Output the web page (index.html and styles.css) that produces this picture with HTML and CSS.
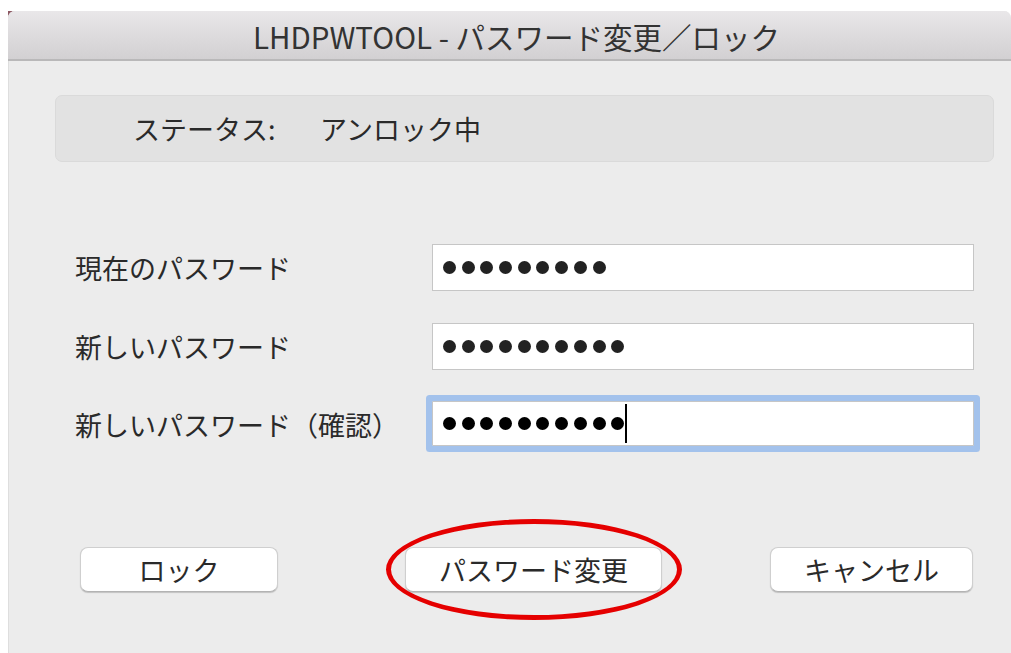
FILE: index.html
```html
<!DOCTYPE html>
<html lang="ja">
<head>
<meta charset="utf-8">
<title>LHDPWTOOL</title>
<link rel="stylesheet" href="styles.css">
</head>
<body>
<div class="desk">
  <div class="window">
    <header class="titlebar">LHDPWTOOL - パスワード変更／ロック</header>
    <main class="content">
      <div class="status">
        <span class="status-label">ステータス:</span>
        <span class="status-value">アンロック中</span>
      </div>

      <div class="form">
        <label class="label">現在のパスワード</label>
        <div class="field">
          <span class="dot"></span><span class="dot"></span><span class="dot"></span>
          <span class="dot"></span><span class="dot"></span><span class="dot"></span>
          <span class="dot"></span><span class="dot"></span><span class="dot"></span>
        </div>

        <label class="label">新しいパスワード</label>
        <div class="field">
          <span class="dot"></span><span class="dot"></span><span class="dot"></span>
          <span class="dot"></span><span class="dot"></span><span class="dot"></span>
          <span class="dot"></span><span class="dot"></span><span class="dot"></span>
          <span class="dot"></span>
        </div>

        <label class="label">新しいパスワード（確認）</label>
        <div class="field field-focus">
          <span class="dot"></span><span class="dot"></span><span class="dot"></span>
          <span class="dot"></span><span class="dot"></span><span class="dot"></span>
          <span class="dot"></span><span class="dot"></span><span class="dot"></span>
          <span class="dot"></span><span class="caret"></span>
        </div>
      </div>

      <div class="actions">
        <button class="btn btn-lock" type="button">ロック</button>
        <div class="highlight-wrap">
          <button class="btn btn-change" type="button">パスワード変更</button>
          <span class="ring"></span>
        </div>
        <button class="btn btn-cancel" type="button">キャンセル</button>
      </div>
    </main>
  </div>
</div>
</body>
</html>
```

FILE: styles.css
```css
html, body {
  margin: 0;
  padding: 0;
  background: #ffffff;
}

body {
  font-family: "Noto Sans CJK JP", "Noto Sans", sans-serif;
  color: #262626;
}

/* desktop behind the window; only its top-left corner peeks out */
.desk {
  margin: 11px 0 0 8px;
  width: 1003px;
  height: 642px;
  background: linear-gradient(135deg, #8c5862 0 9px, #ffffff 9px);
}

.window {
  width: 1003px;
  height: 642px;
  background: #ececec;
  border-top-left-radius: 7px;
  border-top-right-radius: 7px;
  overflow: hidden;
  display: flex;
  flex-direction: column;
  box-shadow: inset 1px 0 0 #dedede;
}

.titlebar {
  height: 50px;
  box-sizing: border-box;
  flex: none;
  display: flex;
  align-items: center;
  justify-content: center;
  font-size: 29.5px;
  color: #333333;
  background: linear-gradient(#e9e7e9, #d2d0d2);
  border-bottom: 2px solid #b9b8b9;
  padding: 2px 0 0 14px;
}

.content {
  flex: 1;
  padding: 34px 16px 0 47px;
}

.status {
  width: 939px;
  height: 67px;
  box-sizing: border-box;
  background: #e2e2e2;
  border: 1px solid #dadada;
  border-radius: 7px;
  display: flex;
  align-items: center;
  padding-left: 77px;
  font-size: 27px;
  color: #2a2a2a;
}

.status-label {
  width: 187px;
}

.form {
  margin-top: 82px;
  padding-left: 20px;
  display: grid;
  grid-template-columns: 357px 542px;
  row-gap: 32px;
  align-items: center;
}

.label {
  font-size: 27px;
  color: #2a2a2a;
  line-height: 1;
}

.field {
  height: 47px;
  box-sizing: border-box;
  background: #ffffff;
  border: 1px solid #c6c6c6;
  display: flex;
  align-items: center;
  gap: 5.7px;
  padding-left: 10px;
}

.field-focus {
  height: 45px;
  margin-top: -1px;
  box-shadow: 0 0 0 6px #a3c2ec;
  border-radius: 1px;
}

.dot {
  width: 13px;
  height: 13px;
  border-radius: 50%;
  background: #222222;
  flex: none;
}

.field-focus .dot {
  background: #000000;
}

.caret {
  width: 2px;
  height: 39px;
  background: #000000;
  margin-left: -5px;
  flex: none;
}

.actions {
  margin-top: 101px;
  padding-left: 25px;
  display: flex;
  align-items: center;
}

.btn {
  height: 45px;
  box-sizing: border-box;
  background: #ffffff;
  border: 1px solid #cfcfcf;
  border-bottom-color: #b3b3b3;
  border-radius: 8px;
  box-shadow: 0 1px 1px rgba(0, 0, 0, 0.18);
  font-family: inherit;
  font-size: 27px;
  color: #2a2a2a;
  padding: 0;
  line-height: 1;
}

.btn-lock {
  width: 198px;
}

.highlight-wrap {
  position: relative;
  margin-left: 127px;
}

.btn-change {
  width: 257px;
  display: block;
}

/* red annotation ring around the change button */
.ring {
  position: absolute;
  left: -19px;
  top: -28px;
  width: 296px;
  height: 101px;
  box-sizing: border-box;
  border: 5px solid #e50000;
  border-radius: 50%;
  pointer-events: none;
}

.btn-cancel {
  width: 203px;
  margin-left: 108px;
}
```
